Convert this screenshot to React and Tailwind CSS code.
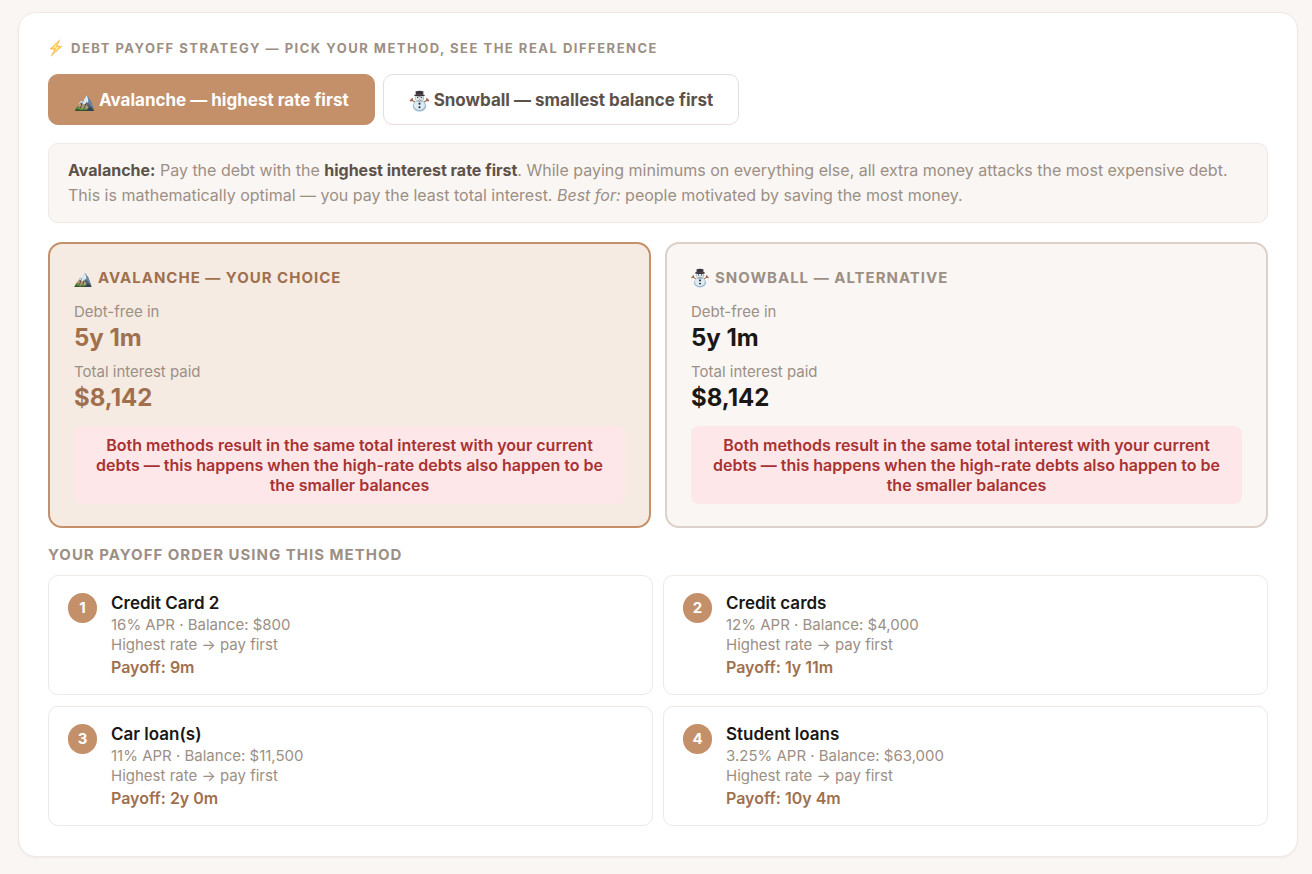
import React, { useState } from 'react';
import clsx from 'clsx';

const TIE_NOTE =
  'Both methods result in the same total interest with your current debts — this happens when the high-rate debts also happen to be the smaller balances';

const debts = [
  { name: 'Credit Card 2', apr: '16%', balance: '$800', payoff: '9m' },
  { name: 'Credit cards', apr: '12%', balance: '$4,000', payoff: '1y 11m' },
  { name: 'Car loan(s)', apr: '11%', balance: '$11,500', payoff: '2y 0m' },
  { name: 'Student loans', apr: '3.25%', balance: '$63,000', payoff: '10y 4m' },
];

const BoltIcon = ({ className }) => (
  <svg viewBox="0 0 16 18" className={className} aria-hidden="true">
    <path d="M11.8.8 2 9.9l4.8.5L3 17.2 13.8 7.4l-4.6-.6z" fill="#fdc54a" stroke="#f7b04a" strokeWidth=".5" strokeLinejoin="round" />
    <path d="M10.2 3 4.2 9l4.2.5-2.6 4.4 5.8-5.7-4-.6z" fill="#ffe98f" />
  </svg>
);

const MountainIcon = ({ className }) => (
  <svg viewBox="0 0 20 18" className={className} aria-hidden="true">
    <path d="M3.4 12.5 6.6 6.4l2.4.6L12.4 1 16 6.5l3.7 9.8H4z" fill="#4f6478" />
    <path d="M12.4 1 9.6 5.4 7.3 12l2.4-2 1.1 1.6 1.4-4 1.4 1.8.5-3.2 1.4.6z" fill="#dfe9f1" />
    <path d="M12.4 1 16 6.5l3 8.3-4.2-4.6-1-4z" fill="#6485a3" />
    <path d="M4 10 6.6 6.4l2 .6-.8 2.6-1.4-.8L4.8 12z" fill="#c9d8e4" />
    <path d="M.5 16.5 3.4 11l3.2-2.5 2.2 2.2 2.4-1.4 2 3.2 3 4z" fill="#b39b76" />
    <path d="m6.5 9 .8 2.4-1.8 3M11 9.8l-.6 2.8-1.8 2" fill="none" stroke="#4c4032" strokeWidth="1" />
    <path d="M.3 17c.6-2.8 2.1-5 3.6-5 .8 1.6 2 2.6 3.8 2.8l2.5-1.2 2 1.6 3.2-1.6 4.2 3.4z" fill="#5c8740" />
    <path d="M.3 17 2 14.8l2.4.6 2 .8 4-.5 3.6.9 5.6.4z" fill="#34532a" />
    <path d="m13 15 2.4-2.4 4.4 4.4H11z" fill="#33434c" />
  </svg>
);

const SnowmanIcon = ({ className }) => (
  <svg viewBox="0 0 20 22" className={className} aria-hidden="true">
    <path d="M5.6 12.2 1.4 9.4M3 10.4l-.4-2.2M3 10.4l-2.2.2M14.4 12.2l4.2-2.8M17 10.4l.4-2.2M17 10.4l2.2.2" fill="none" stroke="#a0614c" strokeWidth="1.1" strokeLinecap="round" />
    <ellipse cx="10" cy="16" rx="6.7" ry="5.6" fill="#9dbbd0" />
    <ellipse cx="9.8" cy="15.2" rx="5.5" ry="4.7" fill="#dfebf3" />
    <circle cx="10" cy="8" r="4.6" fill="#a3bfd2" />
    <circle cx="9.8" cy="7.8" r="3.7" fill="#e3edf4" />
    <path d="M6 1.6C8.2.4 11.8.4 14 1.6l-.4 2.8c1.4.3 2.1.8 2 1.2-.7 1.1-10.5 1.1-11.2 0-.1-.4.6-.9 2-1.2z" fill="#34343a" />
    <path d="M6.3 3.4c2.2.8 5.2.8 7.4 0l-.1 1.2c-2 .8-5.2.8-7.2 0z" fill="#5f4548" />
    <circle cx="8.2" cy="7.6" r=".7" fill="#222" />
    <circle cx="11.8" cy="7.6" r=".7" fill="#222" />
    <path d="m9.4 8.6 2 .5-1.8.6z" fill="#e07a35" />
    <path d="M8.2 10.4c1.2.7 2.4.7 3.6 0" fill="none" stroke="#444" strokeWidth=".6" />
    <circle cx="10" cy="13.8" r="1" fill="#222" />
    <circle cx="10" cy="17.2" r="1" fill="#222" />
  </svg>
);

const MethodButton = ({ icon, label, active, onClick }) => (
  <button
    type="button"
    aria-pressed={active}
    onClick={onClick}
    className={clsx(
      'flex h-[51px] items-center gap-1 rounded-[10px] border px-[25px] pt-[3px] text-[17px] font-bold',
      active ? 'border-[#c4906a] bg-[#c4906a] text-white' : 'border-[#e8ddd8] bg-white text-[#5c524a]'
    )}
  >
    {icon}
    {label}
  </button>
);

const Stat = ({ label, value, chosen }) => (
  <div>
    <dt className="text-[15px] leading-5 text-[#9c8f85]">{label}</dt>
    <dd className={clsx('text-2xl leading-8 font-bold', chosen ? 'text-[#a0704e]' : 'text-[#1a1814]')}>{value}</dd>
  </div>
);

const MethodCard = ({ icon, title, chosen }) => (
  <section
    className={clsx(
      'rounded-[14px] border-2 px-6 py-[22px]',
      chosen ? 'border-[#c4906a] bg-[#f5ebe2]' : 'border-[#ddd0c8] bg-[#faf6f3]'
    )}
  >
    <h3
      className={clsx(
        'flex items-center gap-1.5 text-[15px] leading-6 font-bold tracking-[1px] uppercase',
        chosen ? 'text-[#a0704e]' : 'text-[#9c8f85]'
      )}
    >
      {icon}
      {title}
    </h3>
    <dl className="mt-3 flex flex-col gap-2">
      <Stat label="Debt-free in" value="5y 1m" chosen={chosen} />
      <Stat label="Total interest paid" value="$8,142" chosen={chosen} />
    </dl>
    <p className="mt-3 rounded-lg bg-[#fde7e8] px-4 py-[9px] text-center text-base leading-5 font-semibold text-[#a83232]">
      {TIE_NOTE}
    </p>
  </section>
);

const DebtCard = ({ rank, debt, hint }) => (
  <li className="flex gap-3.5 rounded-[10px] border border-[#f0e8e4] px-[19px] pt-[15px] pb-3.5">
    <span className="mt-0.5 flex h-[30px] w-[29px] shrink-0 items-center justify-center rounded-full bg-[#c4906a] text-[15px] font-bold text-white">
      {rank}
    </span>
    <div>
      <h4 className="text-[17px] leading-6 font-semibold text-[#1a1814]">{debt.name}</h4>
      <p className="text-[15px] leading-5 text-[#9c8f85]">
        {debt.apr} APR · Balance: {debt.balance}
      </p>
      <p className="text-[15px] leading-5 text-[#9c8f85]">{hint}</p>
      <p className="text-base leading-[25px] font-semibold text-[#a0704e]">Payoff: {debt.payoff}</p>
    </div>
  </li>
);

const App = () => {
  const [method, setMethod] = useState('avalanche');
  const avalanche = method === 'avalanche';

  return (
    <div className="min-h-screen bg-[#faf6f3] pt-3 pr-3.5 pb-[17px] pl-[18px] font-['Inter',sans-serif]">
      <main className="rounded-[18px] border border-[#f0e8e4] bg-white px-[29px] pt-[25px] pb-[30px] shadow-xs">
        <h2 className="flex items-center gap-[7px] text-[13px] leading-5 font-bold tracking-[1.5px] text-[#9c8f85] uppercase">
          <BoltIcon className="h-[18px] w-4" />
          Debt payoff strategy — pick your method, see the real difference
        </h2>

        {/* Method picker */}
        <div className="mt-4 flex flex-wrap gap-2">
          <MethodButton
            icon={<MountainIcon className="mt-1 h-[18px] w-[21px]" />}
            label="Avalanche — highest rate first"
            active={avalanche}
            onClick={() => setMethod('avalanche')}
          />
          <MethodButton
            icon={<SnowmanIcon className="h-[22px] w-[21px]" />}
            label="Snowball — smallest balance first"
            active={!avalanche}
            onClick={() => setMethod('snowball')}
          />
        </div>

        <p className="mt-[18px] rounded-[10px] border border-[#f0e8e4] bg-[#faf6f3] px-[19px] py-3.5 text-base leading-[25px] text-[#9c8f85]">
          {avalanche ? (
            <>
              <strong className="font-bold text-[#5c524a]">Avalanche:</strong> Pay the debt with the{' '}
              <strong className="font-bold text-[#5c524a]">highest interest rate first</strong>. While paying minimums on
              everything else, all extra money attacks the most expensive debt. This is mathematically optimal — you pay
              the least total interest. <em>Best for:</em> people motivated by saving the most money.
            </>
          ) : (
            <>
              <strong className="font-bold text-[#5c524a]">Snowball:</strong> Pay the debt with the{' '}
              <strong className="font-bold text-[#5c524a]">smallest balance first</strong>. Each debt you clear frees up
              its payment for the next one. <em>Best for:</em> people motivated by quick wins.
            </>
          )}
        </p>

        {/* Side by side comparison */}
        <div className="mt-[19px] grid grid-cols-2 gap-3.5">
          <MethodCard
            icon={<MountainIcon className="mt-1 h-4 w-[18px]" />}
            title={avalanche ? 'Avalanche — your choice' : 'Avalanche — alternative'}
            chosen={avalanche}
          />
          <MethodCard
            icon={<SnowmanIcon className="h-5 w-[18px]" />}
            title={avalanche ? 'Snowball — alternative' : 'Snowball — your choice'}
            chosen={!avalanche}
          />
        </div>

        {/* Payoff order */}
        <h3 className="mt-[17px] text-[15px] leading-5 font-bold tracking-[1px] text-[#9c8f85] uppercase">
          Your payoff order using this method
        </h3>
        <ol className="mt-2.5 grid grid-cols-2 gap-x-2.5 gap-y-[11px]">
          {debts.map((debt, i) => (
            <DebtCard
              key={debt.name}
              rank={i + 1}
              debt={debt}
              hint={avalanche ? 'Highest rate → pay first' : 'Smallest balance → pay first'}
            />
          ))}
        </ol>
      </main>
    </div>
  );
};

export default App;
